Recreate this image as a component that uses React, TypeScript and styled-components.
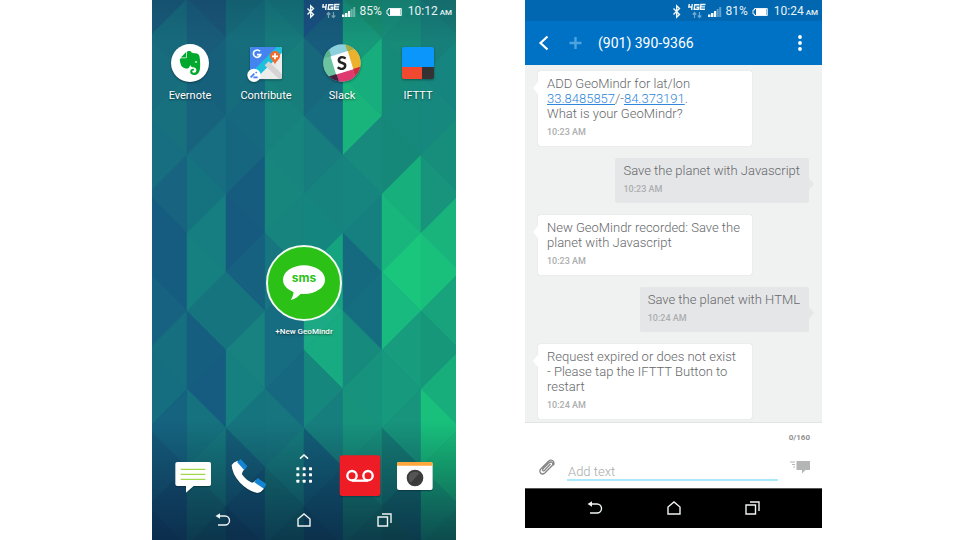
import React from "react";
import styled, { createGlobalStyle } from "styled-components";
import { SiEvernote } from "react-icons/si";

const GlobalStyle = createGlobalStyle`
  *, *::before, *::after { box-sizing: border-box; }
  body { margin: 0; background: #fff; font-family: Roboto, "Liberation Sans", sans-serif; }
  button { border: 0; padding: 0; background: none; font: inherit; color: inherit; cursor: pointer; }
  svg { display: block; }
`;

const Page = styled.main`
  display: grid;
  grid-template-columns: 152fr 304fr 69fr 297fr 138fr;
  align-items: start;
  min-height: 100vh;
`;

const HomePhone = styled.section`
  grid-column: 2;
  position: relative;
  isolation: isolate;
  display: flex;
  flex-direction: column;
  min-height: 100vh;
  overflow: hidden;
  color: #fff;
`;

const ChatPhone = styled.section`
  grid-column: 4;
  display: flex;
  flex-direction: column;
`;

const WallpaperSvg = styled.svg`
  position: absolute;
  inset: 0;
  z-index: -1;
  width: 100%;
  height: 100%;
`;

const StatusRow = styled.div<{ $bg?: string }>`
  display: flex;
  justify-content: flex-end;
  align-items: center;
  height: 21px;
  padding: 2px 4px 0 0;
  background: ${(p) => p.$bg ?? "transparent"};
  color: #e8f2f4;
  font-size: 12px;
  line-height: 19px;
`;

const StatusIcons = styled.svg`
  width: 50px;
  height: 20px;
  margin-right: 4px;
`;

const Battery = styled.svg`
  width: 16px;
  height: 10px;
  margin: 0 6px 0 4px;
`;

const Meridiem = styled.span`
  margin-left: 2px;
  padding-top: 2px;
  font-size: 8px;
  font-weight: 500;
`;

const AppRow = styled.nav`
  display: grid;
  grid-template-columns: repeat(4, 1fr);
  padding-top: 22px;
`;

const AppButton = styled.button`
  display: flex;
  flex-direction: column;
  align-items: center;
  gap: 6px;
  font-size: 11px;
  line-height: 14px;
`;

const Label = styled.span`
  text-shadow: 0 1px 2px rgba(0, 0, 0, 0.5);
`;

const AppIcon = styled.svg`
  width: 40px;
  height: 40px;
  filter: drop-shadow(0 1px 1px rgba(0, 0, 0, 0.35));
`;

const EvernoteDisc = styled.span`
  display: grid;
  place-items: center;
  width: 38px;
  height: 38px;
  margin: 1px;
  border-radius: 50%;
  background: #fff;
  color: #00a82d;
  font-size: 24px;
  box-shadow: 0 1px 2px rgba(0, 0, 0, 0.4);
`;

const WidgetButton = styled.button`
  display: flex;
  flex-direction: column;
  align-items: center;
  gap: 3px;
  align-self: center;
  margin-top: 141px;
  font-size: 8px;
  font-weight: 500;
  line-height: 14px;
`;

const WidgetIcon = styled.svg`
  width: 78px;
  height: 78px;
`;

const Dock = styled.nav`
  display: grid;
  grid-template-columns: repeat(5, 1fr);
  justify-items: center;
  margin-top: auto;
  padding: 0 13px 2px;
`;

const DockIcon = styled.svg`
  width: 44px;
  height: 44px;
`;

const NavBar = styled.nav<{ $bg?: string; $line?: string }>`
  display: flex;
  justify-content: space-around;
  align-items: center;
  height: 40px;
  padding: 0 30px 1px;
  background: ${(p) => p.$bg ?? "transparent"};
  border-top: 1px solid ${(p) => p.$line ?? "transparent"};
`;

const NavIcon = styled.svg`
  width: 18px;
  height: 18px;
  fill: none;
  stroke: #eef3f3;
  stroke-width: 1.4;
`;

const ChatHeader = styled.header`
  display: flex;
  align-items: center;
  height: 44px;
  padding: 0 16px 0 13px;
  background: #0072c6;
  color: #fff;
`;

const HeaderIcon = styled.svg<{ $w: number }>`
  width: ${(p) => p.$w}px;
  height: 18px;
`;

const Plus = styled.button`
  margin: 0 15px 0 19px;
`;

const Title = styled.h1`
  flex: 1;
  margin: 0;
  font-size: 14px;
  font-weight: 400;
  line-height: 20px;
`;

const Thread = styled.div`
  display: flex;
  flex-direction: column;
  gap: 12px;
  padding: 6px 13px 3px;
  background: #f0f2f2;
`;

const Bubble = styled.article<{ $sent?: boolean }>`
  position: relative;
  align-self: ${(p) => (p.$sent ? "flex-end" : "flex-start")};
  width: ${(p) => (p.$sent ? "auto" : "79%")};
  padding: 5px 9px 6px ${(p) => (p.$sent ? 8 : 9)}px;
  border-radius: 2px;
  background: ${(p) => (p.$sent ? "#e5e6e8" : "#fff")};
  box-shadow: 0 0 1px rgba(0, 0, 0, ${(p) => (p.$sent ? 0 : 0.22)});
  color: #66686a;

  &::after {
    content: "";
    position: absolute;
    top: ${(p) => (p.$sent ? 20 : 11)}px;
    ${(p) => (p.$sent ? "left: 100%;" : "right: 100%;")}
    border: 6px solid transparent;
    border-width: 6px 5px;
    ${(p) =>
      p.$sent
        ? "border-left-color: #e5e6e8; border-right: 0;"
        : "border-right-color: #fff; border-left: 0;"}
  }
`;

const BubbleText = styled.p`
  margin: 0;
  font-size: 13px;
  font-weight: 300;
  line-height: 15px;
  white-space: pre-line;
`;

const BubbleTime = styled.time`
  display: block;
  margin-top: 4px;
  color: #acaeb0;
  font-size: 9px;
  font-weight: 500;
  line-height: 15px;
`;

const GeoLink = styled.a`
  color: #2f86da;
`;

const Composer = styled.form`
  display: grid;
  grid-template-columns: 17px 1fr 20px;
  column-gap: 12px;
  align-items: center;
  padding: 8px 12px 7px 13px;
  border-top: 1px solid #e2e4e4;
  background: #fff;
`;

const Counter = styled.output`
  grid-column: 1 / -1;
  justify-self: end;
  color: #909090;
  font-size: 8px;
  font-weight: 700;
  line-height: 14px;
`;

const MessageInput = styled.input`
  min-width: 0;
  width: 100%;
  height: 20px;
  margin-top: 16px;
  padding: 3px 0 0 1px;
  border: 0;
  border-bottom: 2px solid #ace8fc;
  outline: 0;
  background: none;
  color: #707274;
  font: 300 13px/15px Roboto, "Liberation Sans", sans-serif;

  &::placeholder { color: #a8aaaa; opacity: 1; }
`;

const ClipIcon = styled.svg`
  width: 17px;
  height: 18px;
  margin-top: 7px;
`;

const SendIcon = styled.svg`
  width: 20px;
  height: 14px;
  margin-top: 7px;
`;

/* Triangle colours for each wallpaper column, top to bottom. */
const wallpaperColumns: string[][] = [
  ["#185a78", "#176a7c", "#176c7d", "#17707e", "#166e80", "#176380", "#165b80", "#165c80", "#166280", "#156f7f", "#156e7f", "#15637f", "#155a7a", "#145074", "#134870"],
  ["#1a5576", "#185c7a", "#17607c", "#17637e", "#166e80", "#15727f", "#167e80", "#167f7f", "#16747f", "#155e80", "#155c80", "#15727e", "#15787c", "#146c74", "#12606c"],
  ["#156a78", "#166e7c", "#166c7d", "#16687e", "#16667f", "#165c7f", "#165a80", "#166080", "#16747f", "#17827f", "#167f7f", "#16747e", "#145f79", "#135676", "#124c6c"],
  ["#15767a", "#167a7c", "#177e7c", "#17827d", "#17857d", "#17867d", "#17847e", "#16757f", "#166c80", "#166c80", "#166880", "#16757e", "#157c7c", "#147274", "#126a6c"],
  ["#195080", "#175c7c", "#17687c", "#166d7f", "#177d7f", "#17837f", "#15857f", "#16a480", "#1caa84", "#18aa80", "#16877c", "#167f7d", "#135f78", "#125874", "#12506c"],
  ["#17906e", "#17987a", "#18ad7c", "#19b47c", "#17897d", "#17857f", "#168080", "#156a80", "#156e80", "#168a7d", "#17937d", "#17937c", "#178f7a", "#148070", "#147868"],
  ["#178f78", "#178a78", "#168a78", "#16887c", "#168879", "#17b07c", "#18b67c", "#19c67c", "#18ba80", "#179c7e", "#17997d", "#17947b", "#147a72", "#126c6c", "#127060"],
  ["#177a74", "#177f79", "#16857f", "#16887e", "#178e7c", "#17947b", "#19b37c", "#18c07c", "#18a37c", "#16977a", "#17ae7c", "#18c07c", "#17bc78", "#16a878", "#15a070"],
];

const STEP = 39;

function Wallpaper() {
  return (
    <WallpaperSvg viewBox="0 0 304 540" preserveAspectRatio="none" aria-hidden="true">
      <defs>
        <linearGradient id="floor" x1="0" y1="0" x2="0" y2="1">
          <stop offset="0.78" stopColor="#08203c" stopOpacity="0" />
          <stop offset="1" stopColor="#08203c" stopOpacity="0.66" />
        </linearGradient>
        <linearGradient id="ceiling" x1="0" y1="0" x2="0" y2="1">
          <stop offset="0" stopColor="#0a3050" stopOpacity="0.2" />
          <stop offset="0.08" stopColor="#0a3050" stopOpacity="0" />
        </linearGradient>
      </defs>
      <rect width="304" height="540" fill="#16757e" />
      {wallpaperColumns.map((colors, col) =>
        colors.map((fill, row) => {
          const left = -4 + col * STEP;
          const right = left + STEP;
          const y = -1 + row * STEP;
          const apexLeft = (col + row) % 2 === 1;
          const apex = apexLeft ? left : right;
          const base = apexLeft ? right : left;
          return (
            <polygon
              key={`${col}-${row}`}
              points={`${apex},${y} ${base},${y - STEP} ${base},${y + STEP}`}
              fill={fill}
              stroke={fill}
              strokeWidth="0.4"
            />
          );
        })
      )}
      <rect width="304" height="540" fill="url(#ceiling)" />
      <rect width="304" height="540" fill="url(#floor)" />
    </WallpaperSvg>
  );
}

function StatusBar({ charge, time, bg }: { charge: string; time: string; bg?: string }) {
  return (
    <StatusRow $bg={bg}>
      <StatusIcons viewBox="0 0 50 20" aria-label="Bluetooth, 4G LTE, signal">
        <path d="M1.5 6.500 L7.5 12.500 L4.700 15.200 V3.800 L7.500 6.500 L1.500 12.500" fill="none" stroke="#f2f8f8" strokeWidth="1.4" />
        <path d="M17.300 2 L16.800 5 H20.500 M20.300 2 L19.600 8 M27.500 2.700 H22.800 L22.200 7.200 H26.300 L26.700 5.200 H24.500 M33.500 2.500 H28.900 L28.300 7.300 H33 M28.600 4.900 H33" fill="none" stroke="#f2f8f8" strokeWidth="1.4" />
        <path d="M22.500 16 V11 M20.700 12.500 L22.500 10.500 L24.300 12.500 M27.500 10 V15 M25.700 13.500 L27.500 15.500 L29.300 13.500" fill="none" stroke="#f2f8f8" strokeOpacity="0.45" strokeWidth="1.2" />
        <path d="M36 15 V12.500 H38.500 V15Z M39 15 V11 H41.500 V15Z M42 15 V9 H44.200 V15Z" fill="#f2f8f8" />
        <path d="M44.700 15 V7 H46.700 V15Z M47.200 15 V5 H49.200 V15Z" fill="#f2f8f8" fillOpacity="0.4" />
      </StatusIcons>
      <span>{charge}</span>
      <Battery viewBox="0 0 16 10" aria-label="Battery">
        <path d="M2.500 1.500 H15.300 V8.500 H2.500 V7 H1 V3 H2.500Z" fill="none" stroke="#e8f2f4" strokeWidth="1" />
        <rect x="4" y="2" width="10.500" height="6" fill="#fff" />
      </Battery>
      <span>{time}</span>
      <Meridiem>AM</Meridiem>
    </StatusRow>
  );
}

function SystemNav({ bg, line }: { bg?: string; line?: string }) {
  return (
    <NavBar $bg={bg} $line={line} aria-label="System">
      <button type="button" aria-label="Back">
        <NavIcon viewBox="0 0 18 18">
          <path d="M4 5 H11 A4.500 4.500 0 0 1 11 14 H4" />
          <path d="M1.500 5 L6 2.200 V7.800Z" fill="#eef3f3" stroke="none" />
        </NavIcon>
      </button>
      <button type="button" aria-label="Home">
        <NavIcon viewBox="0 0 18 18">
          <path d="M3 15 V8 L9 3 L15 8 V15Z" />
        </NavIcon>
      </button>
      <button type="button" aria-label="Recent apps">
        <NavIcon viewBox="0 0 18 18">
          <path d="M2 6 H11.500 V15 H2Z M6 3 H15 V12" />
        </NavIcon>
      </button>
    </NavBar>
  );
}

function ContributeIcon() {
  return (
    <AppIcon viewBox="282 129 120 120">
      <defs>
        <clipPath id="tile"><rect x="294" y="141" width="96" height="97" rx="7" /></clipPath>
      </defs>
      <g clipPath="url(#tile)">
        <rect x="294" y="141" width="96" height="97" fill="#ececec" />
        <path d="M294 141 H378 L294 225Z" fill="#4484ee" />
        <path d="M374 141 H390 V158 L310 238 H294 V222Z" fill="#1cc0dc" />
        <path d="M338 196 L350 184 L390 222 V238 H382Z" fill="#d4d4d4" />
      </g>
      <path d="M324 154 A11 11 0 1 0 326 164 H315" fill="none" stroke="#fff" strokeWidth="5" />
      <path d="M369 194 C366 182 354 179 354 168 A15 15 0 0 1 384 168 C384 179 372 182 369 194Z" fill="#f16a28" />
      <path d="M369 160 V178 M360 169 H378" stroke="#fff" strokeWidth="5" />
      <circle cx="306" cy="226" r="20" fill="#fff" />
      <path d="M296 232 L307 221 M311 219 L314 216 M304 232 H317" stroke="#3f7ff0" strokeWidth="5" />
    </AppIcon>
  );
}

function SlackIcon() {
  return (
    <AppIcon viewBox="510 129 120 120">
      <defs>
        <clipPath id="disc"><circle cx="570" cy="189" r="56" /></clipPath>
      </defs>
      <g clipPath="url(#disc)">
        <g transform="rotate(-17 570 189)">
          <rect x="500" y="120" width="140" height="140" fill="#8bd0dc" />
          <rect x="500" y="160" width="45" height="58" fill="#6cc3a0" />
          <rect x="500" y="120" width="45" height="40" fill="#59b38c" />
          <rect x="596" y="160" width="50" height="58" fill="#ecb22e" />
          <rect x="596" y="120" width="50" height="40" fill="#a5ab3c" />
          <rect x="545" y="216" width="51" height="50" fill="#df3a70" />
          <rect x="500" y="216" width="45" height="50" fill="#45213c" />
          <rect x="596" y="216" width="50" height="50" fill="#d02a3c" />
          <rect x="543" y="160" width="54" height="57" fill="#fff" />
        </g>
      </g>
      <text x="570" y="209" textAnchor="middle" fontFamily="Lato, sans-serif" fontWeight="900" fontSize="56" fill="#222">S</text>
    </AppIcon>
  );
}

function IftttIcon() {
  return (
    <AppIcon viewBox="738 129 120 120">
      <path d="M750 201 V147 Q750 141 756 141 H840 Q846 141 846 147 V201Z" fill="#0a96fb" />
      <path d="M750 201 H810 V237 H756 Q750 237 750 231Z" fill="#f14830" />
      <path d="M810 201 H846 V231 Q846 237 840 237 H810Z" fill="#333" />
    </AppIcon>
  );
}

function SmsWidget() {
  return (
    <WidgetButton type="button">
      <WidgetIcon viewBox="339 -75 234 234">
        <circle cx="456" cy="42" r="111" fill="#2bc117" stroke="#f2f8f2" strokeWidth="6" />
        <ellipse cx="456" cy="32" rx="63" ry="43" fill="#fff" />
        <path d="M425 62 Q426 78 416 93 Q436 88 448 72Z" fill="#fff" />
        <text x="456" y="40" textAnchor="middle" fontFamily="Inter, sans-serif" fontWeight="700" fontSize="36" fill="#2bc117">sms</text>
      </WidgetIcon>
      <Label>+New GeoMindr</Label>
    </WidgetButton>
  );
}

function HomeDock() {
  return (
    <Dock aria-label="Dock">
      <button type="button" aria-label="Messages">
        <DockIcon viewBox="57 42 132 132">
          <path d="M76 70 H172 Q177 70 177 75 V137 Q177 142 172 142 H125 L102 162 V142 H76 Q70 142 70 137 V75 Q70 70 76 70Z" fill="#062c38" fillOpacity="0.5" />
          <path d="M76 66 H172 Q177 66 177 71 V133 Q177 138 172 138 H125 L102 158 V138 H76 Q70 138 70 133 V71 Q70 66 76 66Z" fill="#fff" />
          <path d="M86 88 H160 M86 103 H160 M86 118 H160" stroke="#a0d850" strokeWidth="3.500" />
        </DockIcon>
      </button>
      <button type="button" aria-label="Phone">
        <DockIcon viewBox="220 42 132 132">
          <path d="M238 79 L253 67 L274 90 Q264 102 272 112 Q286 130 302 134 L314 124 L336 148 Q328 160 314 163 Q288 158 262 132 Q238 106 238 79Z" fill="#062c38" fillOpacity="0.45" />
          <path d="M237 75 Q242 66 255 62 L276 88 Q264 98 270 106 Q284 124 298 128 Q304 128 310 120 L334 146 Q326 157 314 159 Q288 154 262 128 Q238 102 237 75Z" fill="#fff" />
          <path d="M253 66 L264 57 L284 79 L275 91Z M305 127 L315 114 L341 132 L334 146Z" fill="#1484d4" />
        </DockIcon>
      </button>
      <button type="button" aria-label="All apps">
        <DockIcon viewBox="390 42 132 132">
          <path d="M444 56 L456 45 L468 56" fill="none" stroke="#fff" strokeWidth="4.500" />
          {[86, 104, 123].map((y) =>
            [437, 456, 475].map((x) => (
              <rect key={`${x}-${y}`} x={x - 4} y={y - 4} width="9" height="9" rx="2" fill="#fff" />
            ))
          )}
        </DockIcon>
      </button>
      <button type="button" aria-label="Voicemail">
        <DockIcon viewBox="556 42 132 132">
          <rect x="561" y="50" width="122" height="122" rx="8" fill="#062c38" fillOpacity="0.4" />
          <rect x="561" y="46" width="122" height="122" rx="8" fill="#ee1c25" />
          <g fill="none" stroke="#fff" strokeWidth="7">
            <circle cx="598" cy="107" r="14" />
            <circle cx="646" cy="107" r="14" />
            <path d="M598 122 H646" />
          </g>
        </DockIcon>
      </button>
      <button type="button" aria-label="Camera">
        <DockIcon viewBox="723 42 132 132">
          <rect x="735" y="70" width="107" height="84" rx="6" fill="#062c38" fillOpacity="0.5" />
          <rect x="735" y="66" width="107" height="84" rx="6" fill="#fff" />
          <path d="M735 77 V72 Q735 66 741 66 H836 Q842 66 842 72 V77Z" fill="#ffa73c" />
          <circle cx="789" cy="114" r="25" fill="#3c3c3c" />
          <circle cx="789" cy="114" r="19" fill="#555" />
          <path d="M776 128 L802 100 A19 19 0 0 1 776 128Z" fill="#3a3a3a" />
        </DockIcon>
      </button>
    </Dock>
  );
}

interface Message {
  text: React.ReactNode;
  time: string;
  sent?: boolean;
}

const messages: Message[] = [
  {
    text: (
      <>
        ADD GeoMindr for lat/lon{"\n"}
        <GeoLink href="geo:33.8485857">33.8485857</GeoLink>/-
        <GeoLink href="geo:84.373191">84.373191</GeoLink>.{"\n"}
        What is your GeoMindr?
      </>
    ),
    time: "10:23 AM",
  },
  { text: "Save the planet with Javascript", time: "10:23 AM", sent: true },
  { text: "New GeoMindr recorded: Save the\nplanet with Javascript", time: "10:23 AM" },
  { text: "Save the planet with HTML", time: "10:24 AM", sent: true },
  { text: "Request expired or does not exist\n- Please tap the IFTTT Button to\nrestart", time: "10:24 AM" },
];

export default function App() {
  return (
    <>
      <GlobalStyle />
      <Page>
        <HomePhone aria-label="Home screen">
          <Wallpaper />
          <StatusBar charge="85%" time="10:12" />
          <AppRow aria-label="Apps">
            <AppButton type="button">
              <EvernoteDisc><SiEvernote /></EvernoteDisc>
              <Label>Evernote</Label>
            </AppButton>
            <AppButton type="button"><ContributeIcon /><Label>Contribute</Label></AppButton>
            <AppButton type="button"><SlackIcon /><Label>Slack</Label></AppButton>
            <AppButton type="button"><IftttIcon /><Label>IFTTT</Label></AppButton>
          </AppRow>
          <SmsWidget />
          <HomeDock />
          <SystemNav />
        </HomePhone>

        <ChatPhone aria-label="Messages">
          <StatusBar charge="81%" time="10:24" bg="#0067b0" />
          <ChatHeader>
            <button type="button" aria-label="Go back">
              <HeaderIcon $w={11} viewBox="0 0 11 18">
                <path d="M9.500 2.500 L2.500 9 L9.500 15.500" fill="none" stroke="#fff" strokeWidth="2.200" />
              </HeaderIcon>
            </button>
            <Plus type="button" aria-label="Add">
              <HeaderIcon $w={15} viewBox="0 0 15 18">
                <path d="M7.500 3 V15 M1.500 9 H13.500" stroke="#4ea4de" strokeWidth="2.400" />
              </HeaderIcon>
            </Plus>
            <Title>(901) 390-9366</Title>
            <button type="button" aria-label="More options">
              <HeaderIcon $w={12} viewBox="0 0 12 18">
                <g fill="#fff">
                  <circle cx="6" cy="3" r="1.900" />
                  <circle cx="6" cy="9" r="1.900" />
                  <circle cx="6" cy="15" r="1.900" />
                </g>
              </HeaderIcon>
            </button>
          </ChatHeader>
          <Thread>
            {messages.map((m, i) => (
              <Bubble key={i} $sent={m.sent}>
                <BubbleText>{m.text}</BubbleText>
                <BubbleTime>{m.time}</BubbleTime>
              </Bubble>
            ))}
          </Thread>
          <Composer onSubmit={(e) => e.preventDefault()}>
            <Counter>0/160</Counter>
            <button type="button" aria-label="Attach">
              <ClipIcon viewBox="0 0 17 18" fill="none" stroke="#858585" strokeWidth="1.300">
                <path d="M12.500 6 L6.500 12.500 Q5 13.500 4.600 12.200 Q4.500 11.300 5.500 10.300 L11 4.800 Q13 3.300 14.300 4.600 Q15.500 6 14 7.800 L6.800 15 Q4.300 17 2.500 15 Q1 12.800 3 10.800 L10.500 3.200 Q12.500 1.500 14.500 2.500 Q17 4.500 15.300 7.500" />
              </ClipIcon>
            </button>
            <MessageInput type="text" placeholder="Add text" aria-label="Add text" />
            <button type="submit" aria-label="Send">
              <SendIcon viewBox="0 0 20 14" fill="#b4b6b6">
                <path d="M6.500 1 H20 V10 H15.500 L12 13.500 V10 H6.500Z" />
                <path d="M0 2 H5 M2 4.500 H5 M3 7 H5" stroke="#b4b6b6" strokeWidth="1" />
              </SendIcon>
            </button>
          </Composer>
          <SystemNav bg="#000" line="#555" />
        </ChatPhone>
      </Page>
    </>
  );
}
